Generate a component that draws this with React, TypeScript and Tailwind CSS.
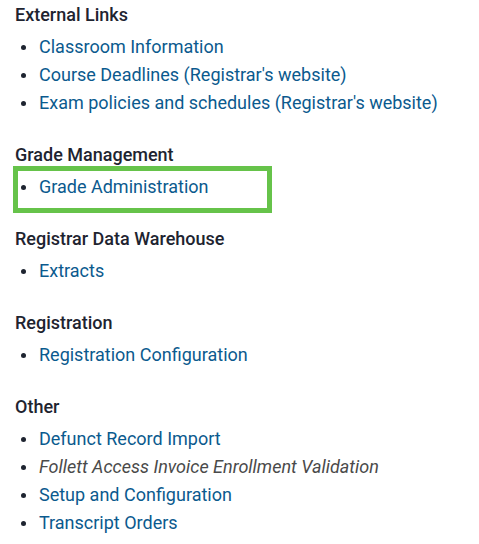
import React from 'react';

type Item = { label: string; italic?: boolean; highlight?: boolean };
type Section = { title: string; items: Item[] };

const sections: Section[] = [
  {
    title: 'External Links',
    items: [
      { label: 'Classroom Information' },
      { label: "Course Deadlines (Registrar's website)" },
      { label: "Exam policies and schedules (Registrar's website)" },
    ],
  },
  {
    title: 'Grade Management',
    items: [{ label: 'Grade Administration', highlight: true }],
  },
  {
    title: 'Registrar Data Warehouse',
    items: [{ label: 'Extracts' }],
  },
  {
    title: 'Registration',
    items: [{ label: 'Registration Configuration' }],
  },
  {
    title: 'Other',
    items: [
      { label: 'Defunct Record Import' },
      { label: 'Follett Access Invoice Enrollment Validation', italic: true },
      { label: 'Setup and Configuration' },
      { label: 'Transcript Orders' },
    ],
  },
];

export default function App() {
  return (
    <div
      className="min-h-[544px] w-[479px] bg-white pl-[15px] pt-[3px]"
      style={{ fontFamily: 'Roboto, "Noto Sans", sans-serif' }}
    >
      {sections.map((section, i) => (
        <div key={section.title} className={i > 0 ? 'mt-[26px]' : ''}>
          <h3 className="text-lg leading-6 font-medium text-[#1e2430]">{section.title}</h3>
          <ul className="mt-[6px]">
            {section.items.map((item) => (
              <li key={item.label} className="relative flex items-center h-7">
                {/* highlight annotation */}
                {item.highlight && (
                  <span className="absolute left-[-2px] top-[-7px] w-[259px] h-[47px] border-[5px] border-[#66c34a]" />
                )}
                <span className="ml-[6px] w-[5px] h-[5px] rounded-full bg-[#1e2430]" />
                <span
                  className={
                    item.italic
                      ? 'ml-[13px] text-lg leading-7 italic text-[#4a4a4a]'
                      : 'ml-[13px] text-lg leading-7 text-[#0b5a8e]'
                  }
                >
                  {item.label}
                </span>
              </li>
            ))}
          </ul>
        </div>
      ))}
    </div>
  );
}
